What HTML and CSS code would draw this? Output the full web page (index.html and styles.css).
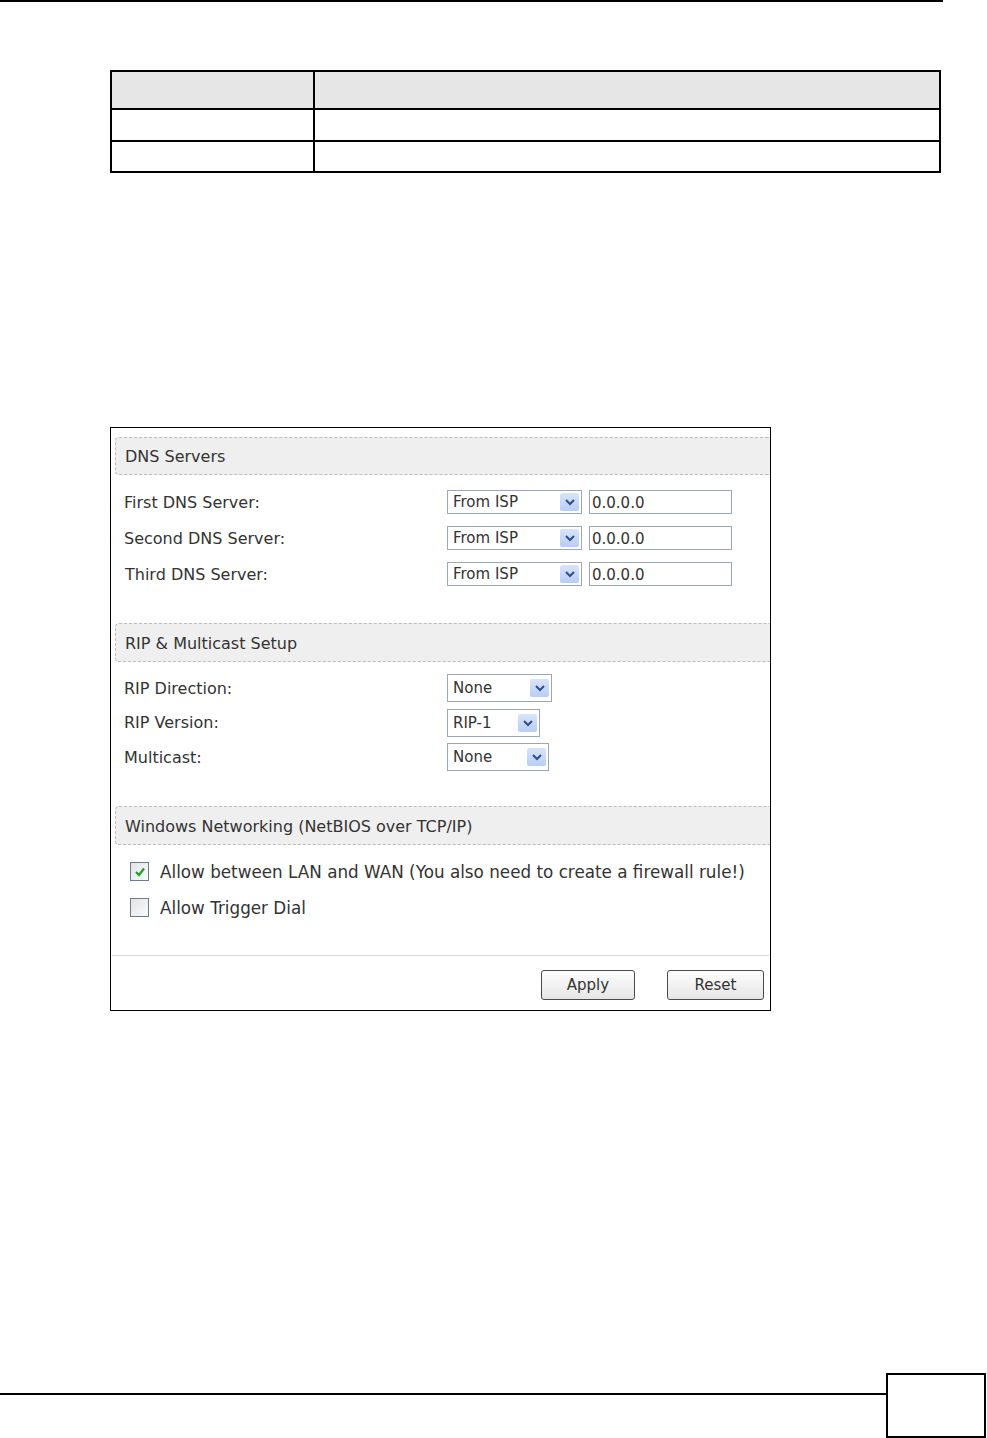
FILE: index.html
```html
<!DOCTYPE html>
<html lang="en">
<head>
  <meta charset="UTF-8" />
  <title>DNS / RIP / NetBIOS settings</title>
  <link rel="stylesheet" href="styles.css">
</head>
<body>
<div class="page">
  <div class="top-rule"></div>

  <table class="desc">
    <tr class="head"><th class="c1"></th><th></th></tr>
    <tr><td class="c1"></td><td></td></tr>
    <tr><td class="c1"></td><td></td></tr>
  </table>

  <div class="shot">
    <div class="section-title">DNS Servers</div>
    <div class="rows">
      <div class="row">
        <span class="label">First DNS Server:</span>
        <div class="select sel-isp"><span>From ISP</span><i class="arrow"><svg viewBox="0 0 10 8" width="10" height="8"><path d="M1 2 L5 6 L9 2" fill="none" stroke="#2c4f8c" stroke-width="2"/></svg></i></div>
        <div class="text-box">0.0.0.0</div>
      </div>
      <div class="row">
        <span class="label">Second DNS Server:</span>
        <div class="select sel-isp"><span>From ISP</span><i class="arrow"><svg viewBox="0 0 10 8" width="10" height="8"><path d="M1 2 L5 6 L9 2" fill="none" stroke="#2c4f8c" stroke-width="2"/></svg></i></div>
        <div class="text-box">0.0.0.0</div>
      </div>
      <div class="row">
        <span class="label label-third">Third DNS Server:</span>
        <div class="select sel-isp"><span>From ISP</span><i class="arrow"><svg viewBox="0 0 10 8" width="10" height="8"><path d="M1 2 L5 6 L9 2" fill="none" stroke="#2c4f8c" stroke-width="2"/></svg></i></div>
        <div class="text-box">0.0.0.0</div>
      </div>
    </div>

    <div class="section-title">RIP &amp; Multicast Setup</div>
    <div class="rows rows-rip">
      <div class="row">
        <span class="label">RIP Direction:</span>
        <div class="select sel-dir"><span>None</span><i class="arrow"><svg viewBox="0 0 10 8" width="10" height="8"><path d="M1 2 L5 6 L9 2" fill="none" stroke="#2c4f8c" stroke-width="2"/></svg></i></div>
      </div>
      <div class="row">
        <span class="label">RIP Version:</span>
        <div class="select sel-ver"><span>RIP-1</span><i class="arrow"><svg viewBox="0 0 10 8" width="10" height="8"><path d="M1 2 L5 6 L9 2" fill="none" stroke="#2c4f8c" stroke-width="2"/></svg></i></div>
      </div>
      <div class="row">
        <span class="label">Multicast:</span>
        <div class="select sel-mc"><span>None</span><i class="arrow"><svg viewBox="0 0 10 8" width="10" height="8"><path d="M1 2 L5 6 L9 2" fill="none" stroke="#2c4f8c" stroke-width="2"/></svg></i></div>
      </div>
    </div>

    <div class="section-title">Windows Networking (NetBIOS over TCP/IP)</div>
    <div class="rows rows-check">
      <div class="row">
        <span class="check"><svg viewBox="0 0 12 12" width="12" height="12"><path d="M2 6 L5 9 L10 2.5" fill="none" stroke="#21a121" stroke-width="2.2"/></svg></span>
        <span class="check-text">Allow between LAN and WAN (You also need to create a firewall rule!)</span>
      </div>
      <div class="row">
        <span class="check"></span>
        <span class="check-text">Allow Trigger Dial</span>
      </div>
    </div>

    <div class="actions">
      <button class="btn btn-apply">Apply</button>
      <button class="btn btn-reset">Reset</button>
    </div>
  </div>

  <div class="footer">
    <div class="footer-rule"></div>
    <div class="page-box"></div>
  </div>
</div>
</body>
</html>
```

FILE: styles.css
```css
body {
  margin: 0;
  background: #fff;
  font-family: "DejaVu Sans", sans-serif;
  color: #333;
}

.page {
  display: flex;
  flex-direction: column;
  min-height: 1438px;
}

.top-rule {
  width: 943px;
  height: 2px;
  background: #000;
}

/* empty description table */
.desc {
  margin: 68px 0 0 110px;
  width: 831px;
  border-collapse: collapse;
}

.desc th,
.desc td {
  border: 2px solid #000;
  height: 29.5px;
  padding: 0;
}

.desc .head th {
  background: #e6e6e6;
  height: 36px;
}

.desc .c1 {
  width: 201px;
}

/* the screen capture */
.shot {
  margin: 254px 0 0 110px;
  width: 659px;
  height: 582px;
  border: 1px solid #000;
  font-size: 16px;
}

.section-title {
  margin: 9px 0 0 4px;
  height: 36px;
  line-height: 37px;
  padding-left: 9px;
  background: #efefef;
  border: 1px dashed #bdbdbd;
  border-right: none;
  border-radius: 4px 0 0 4px;
  color: #333;
}

.rows + .section-title {
  margin-top: 31px;
  height: 37px;
  line-height: 39px;
}

.rows {
  padding: 9px 0 0 13px;
}

.row {
  display: flex;
  align-items: center;
  height: 36px;
}

.rows-rip .row {
  height: 34.5px;
}

.label {
  width: 323px;
}

.label-third {
  padding-left: 1px;
  width: 322px;
}

.select {
  display: flex;
  align-items: center;
  justify-content: space-between;
  height: 24px;
  border: 1px solid #9aa7b6;
  box-sizing: border-box;
  padding: 0 2px 0 5px;
  font-size: 15px;
  background: #fff;
}

.sel-isp { width: 135px; }
.sel-dir { width: 105px; }
.sel-ver { width: 93px; }
.sel-mc { width: 102px; }

.rows-rip .select {
  height: 28px;
}

.arrow {
  display: flex;
  align-items: center;
  justify-content: center;
  width: 19px;
  height: 18px;
  background: linear-gradient(#d8e4fb, #b9cdf3);
  border-radius: 2px;
}

.text-box {
  margin-left: 7px;
  width: 143px;
  height: 24px;
  box-sizing: border-box;
  border: 1px solid #9aa7b6;
  padding: 2px 0 0 2px;
  font-size: 15px;
  line-height: 20px;
}

.rows-check {
  padding-left: 19px;
}

.check {
  display: flex;
  align-items: center;
  justify-content: center;
  width: 17px;
  height: 17px;
  border: 1px solid #6c7c8c;
  background: linear-gradient(135deg, #e0e3e6, #fbfbfb);
  margin-right: 11px;
}

.check-text {
  font-size: 16.8px;
}

.actions {
  margin: 29px 1px 0;
  border-top: 1px solid #dcdcdc;
  padding: 14px 5px 0 0;
  display: flex;
  justify-content: flex-end;
  gap: 32px;
}

.btn {
  height: 30px;
  border: 1px solid #4a4a4a;
  border-radius: 3px;
  background: linear-gradient(#fdfdfd, #e6e6e6);
  font-family: "DejaVu Sans", sans-serif;
  font-size: 15px;
  color: #333;
  padding: 0;
}

.btn-apply { width: 94px; }
.btn-reset { width: 97px; }

/* page footer */
.footer {
  margin-top: auto;
  display: flex;
  align-items: flex-start;
}

.footer-rule {
  flex: 1;
  height: 2px;
  margin-top: 20px;
  background: #000;
}

.page-box {
  width: 96px;
  height: 61px;
  border: 2px solid #000;
  margin-right: 1px;
}
```
